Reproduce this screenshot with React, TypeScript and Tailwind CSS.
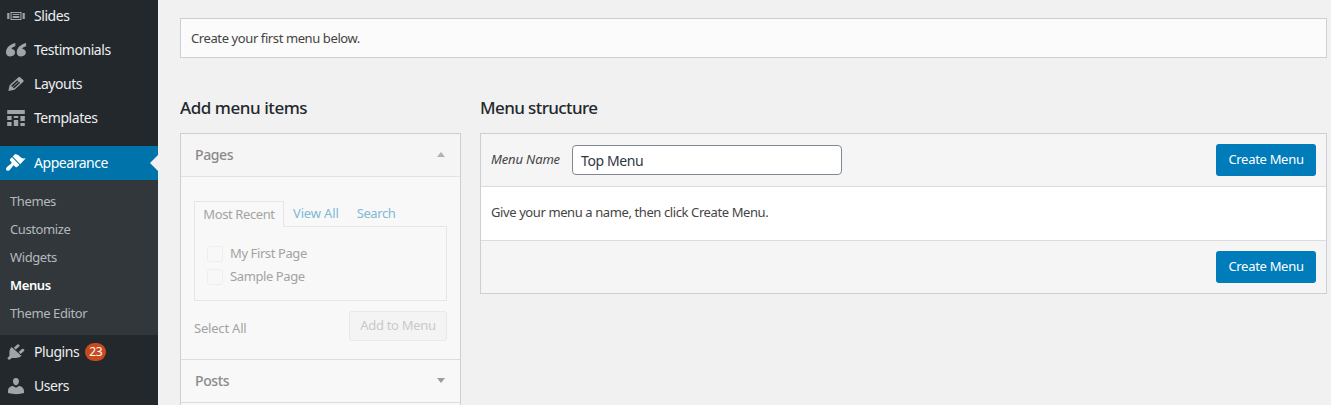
import type { ReactNode } from "react";

const font = "font-['Noto_Sans','Open_Sans',sans-serif]";

function Dash({ d, tall }: { d: string; tall?: boolean }) {
  return (
    <svg
      viewBox="0 0 20 20"
      preserveAspectRatio="none"
      className={tall ? "w-[21px] h-[22px] fill-current" : "w-[22px] h-5 fill-current"}
    >
      <path d={d} />
    </svg>
  );
}

const icons = {
  slides: "M5 14V6h10v8H5zm-3-1V7h2v6H2zm4-6v6h8V7H6zm10 0h2v6h-2V7zm-3 2V8H7v1h6zm0 3v-2H7v2h6z",
  quote: "M9.4 3C4.8 4.4.9 7.4.9 12.4c0 2.6 1.7 4.1 4 4.1 2.5 0 4.3-1.6 4.3-3.9 0-2.2-1.4-3.6-3.3-3.7.3-1.4 1.6-2.3 3.5-2.7zM19.2 3c-4.6 1.4-8.5 4.4-8.5 9.4 0 2.6 1.7 4.1 4 4.1 2.5 0 4.3-1.6 4.3-3.9 0-2.2-1.4-3.6-3.3-3.7.3-1.4 1.6-2.3 3.5-2.7z",
  edit: "M13.89 3.39l2.71 2.72c.46.46.42 1.24.03 1.64l-8.01 8.02-5.56 1.16 1.16-5.58s7.6-7.63 7.99-8.03c.39-.39 1.22-.39 1.68.07zm-2.73 2.79l-5.59 5.61 1.11 1.11 5.54-5.65zm-2.97 8.23l5.58-5.6-1.07-1.08-5.59 5.6z",
  schedule: "M2 2h16v4H2V2zm0 10V8h4v4H2zm6-2V8h4v2H8zm6 3V8h4v5h-4zm-6 5v-6h4v6H8zm-6 0v-4h4v4H2zm12 0v-3h4v3h-4z",
  brush: "M14.48 11.06L7.41 3.99l1.5-1.5c.5-.56 2.3-.47 3.51.32 1.21.8 1.43 1.28 2.91 2.1 1.18.64 2.45 1.26 4.45.85zm-.71.71L6.7 4.7 4.93 6.47c-.39.39-.39 1.02 0 1.41l1.06 1.06c.39.39.39 1.03 0 1.42-.6.6-1.43 1.11-2.21 1.69-.35.26-.7.53-1.01.84C1.43 13.71 1 14.65 1 15.5c0 .83.67 1.5 1.5 1.5.85 0 1.79-.43 2.52-1.16.31-.31.58-.66.84-1.01.58-.78 1.09-1.61 1.69-2.21.39-.39 1.03-.39 1.42 0l1.06 1.06c.39.39 1.02.39 1.41 0z",
  plugin: "M13.11 4.36L9.87 7.6 8 5.73l3.24-3.24c.35-.34 1.05-.2 1.56.32.52.51.66 1.21.31 1.55zm-8 1.77l.91-1.12 9.01 9.01-1.19.84c-.71.71-2.63 1.16-3.82 1.16H6.14L4.9 17.26c-.59.59-1.54.59-2.12 0-.59-.58-.59-1.53 0-2.12l1.24-1.24v-3.88c0-1.13.4-3.19 1.09-3.89zm7.26 3.97l3.24-3.24c.34-.35 1.04-.21 1.55.31.52.51.66 1.21.31 1.55l-3.24 3.25z",
  user: "M10 9.25c-2.27 0-2.73-3.44-2.73-3.44C7 4.02 7.82 2 9.97 2c2.16 0 2.98 2.02 2.71 3.81 0 0-.41 3.44-2.68 3.44zm0 2.57L12.72 10c2.39 0 4.52 2.33 4.52 4.53v2.49s-3.65 1.13-7.24 1.13c-3.65 0-7.24-1.13-7.24-1.13v-2.49c0-2.25 1.94-4.48 4.47-4.48z",
};

function NavItem({ icon, children }: { icon: ReactNode; children: ReactNode }) {
  return (
    <div className="h-[34px] flex items-center text-[#eeeeee] text-[14px] tracking-[-0.45px]">
      <div className="w-[34px] pl-[5px] text-[#a0a5aa]">{icon}</div>
      <div className="flex items-center pb-0.5">{children}</div>
    </div>
  );
}

function SubItem({ label, current }: { label: string; current?: boolean }) {
  return (
    <div
      className={
        current
          ? "h-7 flex items-center pl-2.5 text-[13px] tracking-[-0.4px] font-semibold text-white"
          : "h-7 flex items-center pl-2.5 text-[13px] tracking-[-0.4px] text-[#b4b9be]"
      }
    >
      {label}
    </div>
  );
}

function Sidebar() {
  return (
    <aside className="w-[158px] shrink-0 bg-[#23282d] -mt-px">
      <NavItem icon={<Dash d={icons.slides} />}>Slides</NavItem>
      <NavItem icon={<Dash d={icons.quote} />}>Testimonials</NavItem>
      <NavItem icon={<Dash d={icons.edit} />}>Layouts</NavItem>
      <NavItem icon={<Dash d={icons.schedule} />}>Templates</NavItem>
      <div className="relative mt-[11px] h-[34px] flex items-center bg-[#0073aa] text-white text-[14px] tracking-[-0.45px]">
        <div className="w-[34px] pl-[5px]">
          <Dash d={icons.brush} tall />
        </div>
        <span className="pb-0.5">Appearance</span>
        <div className="absolute right-0 top-[9px] border-y-8 border-r-8 border-y-transparent border-r-[#f1f1f1]" />
      </div>
      <div className="bg-[#32373c] h-[155px] pt-2">
        <SubItem label="Themes" />
        <SubItem label="Customize" />
        <SubItem label="Widgets" />
        <SubItem label="Menus" current />
        <SubItem label="Theme Editor" />
      </div>
      <NavItem icon={<Dash d={icons.plugin} />}>
        Plugins
        <span className="ml-[6px] mt-0.5 h-[18px] w-[21px] rounded-full bg-[#ca4a1f] text-white text-[12px] flex items-center justify-center">
          23
        </span>
      </NavItem>
      <NavItem icon={<Dash d={icons.user} />}>Users</NavItem>
    </aside>
  );
}

function Checkbox({ label }: { label: string }) {
  return (
    <div className="h-[23px] flex items-center">
      <span className="w-4 h-4 ml-3 mr-[7px] rounded-[3px] border border-[#eeeeee] bg-[#f8f8f8]" />
      {label}
    </div>
  );
}

function AddItems() {
  return (
    <div className="w-[281px] shrink-0">
      <h2 className="text-[17px] leading-[23px] font-medium text-[#23282d] tracking-[-0.45px] mb-[14px]">Add menu items</h2>
      <div className="border border-b-0 border-[#ccd0d4] bg-[#f8f8f8] text-[13px] tracking-[-0.4px]">
        <div className="h-[43px] flex items-center justify-between pl-[14px] pr-[15px] pb-0.5 bg-[#f5f5f5] border-b border-[#e2e3e5] text-[#8a8a8a] text-[14px] font-medium">
          Pages
          <span className="border-x-[4px] border-b-[5px] border-x-transparent border-b-[#b0b2b4]" />
        </div>
        <div className="h-[183px] px-[13px] pt-6 border-b border-[#dcdde0] text-[#a3a3a3]">
          <div className="flex h-[26px] relative z-10">
            <div className="w-[90px] flex items-center justify-center border border-b-0 border-[#e6e6e8] bg-[#f8f8f8]">Most Recent</div>
            <div className="ml-[9px] flex items-center tracking-[-0.15px] text-[#7fb9d4]">View All</div>
            <div className="ml-[18px] flex items-center tracking-[-0.4px] text-[#7fb9d4]">Search</div>
          </div>
          <div className="h-[75px] -mt-px border border-[#e6e6e8] pt-[15px]">
            <Checkbox label="My First Page" />
            <Checkbox label="Sample Page" />
          </div>
          <div className="flex justify-between items-center mt-2.5">
            <span className="pt-[5px] tracking-[-0.2px]">Select All</span>
            <span className="w-[98px] h-[30px] flex items-center justify-center rounded-[3px] border border-[#e8e8e8] bg-[#f4f4f4] tracking-[-0.3px] text-[#c9c9c9]">
              Add to Menu
            </span>
          </div>
        </div>
        <div className="h-[43px] flex items-center justify-between pl-[14px] pr-[15px] pb-0.5 border-b border-[#dcdde0] text-[#8a8a8a] text-[14px] font-medium">
          Posts
          <span className="border-x-[4px] border-t-[5px] border-x-transparent border-t-[#9a9c9e]" />
        </div>
        <div className="h-[3px]" />
      </div>
    </div>
  );
}

function CreateButton() {
  return (
    <button className="w-[100px] h-8 rounded-[3px] bg-[#007cba] text-white text-[13px] tracking-[-0.3px]">
      Create Menu
    </button>
  );
}

function MenuStructure() {
  return (
    <div className="flex-1 ml-[19px]">
      <h2 className="text-[17px] leading-[23px] font-medium text-[#23282d] tracking-[-0.6px] mb-[14px]">Menu structure</h2>
      <div className="border border-[#ccd0d4] text-[13px] tracking-[-0.4px] text-[#444444]">
        <div className="h-[53px] flex items-center justify-between pl-2.5 pr-2.5 bg-[#f5f5f5] border-b border-[#dcdcde]">
          <div className="flex items-center">
            <span className="italic w-[81px] tracking-[-0.15px]">Menu Name</span>
            <div className="w-[270px] h-[30px] flex items-center pl-2 rounded-[4px] border border-[#7e8993] bg-white text-[14px] text-[#32373c]">
              Top Menu
            </div>
          </div>
          <CreateButton />
        </div>
        <div className="h-[53px] flex items-center pl-2.5 pb-0.5 bg-white">Give your menu a name, then click Create Menu.</div>
        <div className="h-[53px] flex items-center justify-end pr-2.5 bg-[#f5f5f5] border-t border-[#dcdcde]">
          <CreateButton />
        </div>
      </div>
    </div>
  );
}

export default function App() {
  return (
    <div className={`${font} w-[1331px] h-[405px] overflow-hidden flex bg-[#f1f1f1]`}>
      <Sidebar />
      <main className="flex-1 pl-[22px] pr-1 pt-[18px]">
        <div className="h-10 flex items-center pl-2.5 pt-0.5 border border-[#ccd0d4] bg-[#fbfbfb] text-[13px] tracking-[-0.4px] text-[#444444]">
          Create your first menu below.
        </div>
        <div className="flex mt-[38px]">
          <AddItems />
          <MenuStructure />
        </div>
      </main>
    </div>
  );
}
